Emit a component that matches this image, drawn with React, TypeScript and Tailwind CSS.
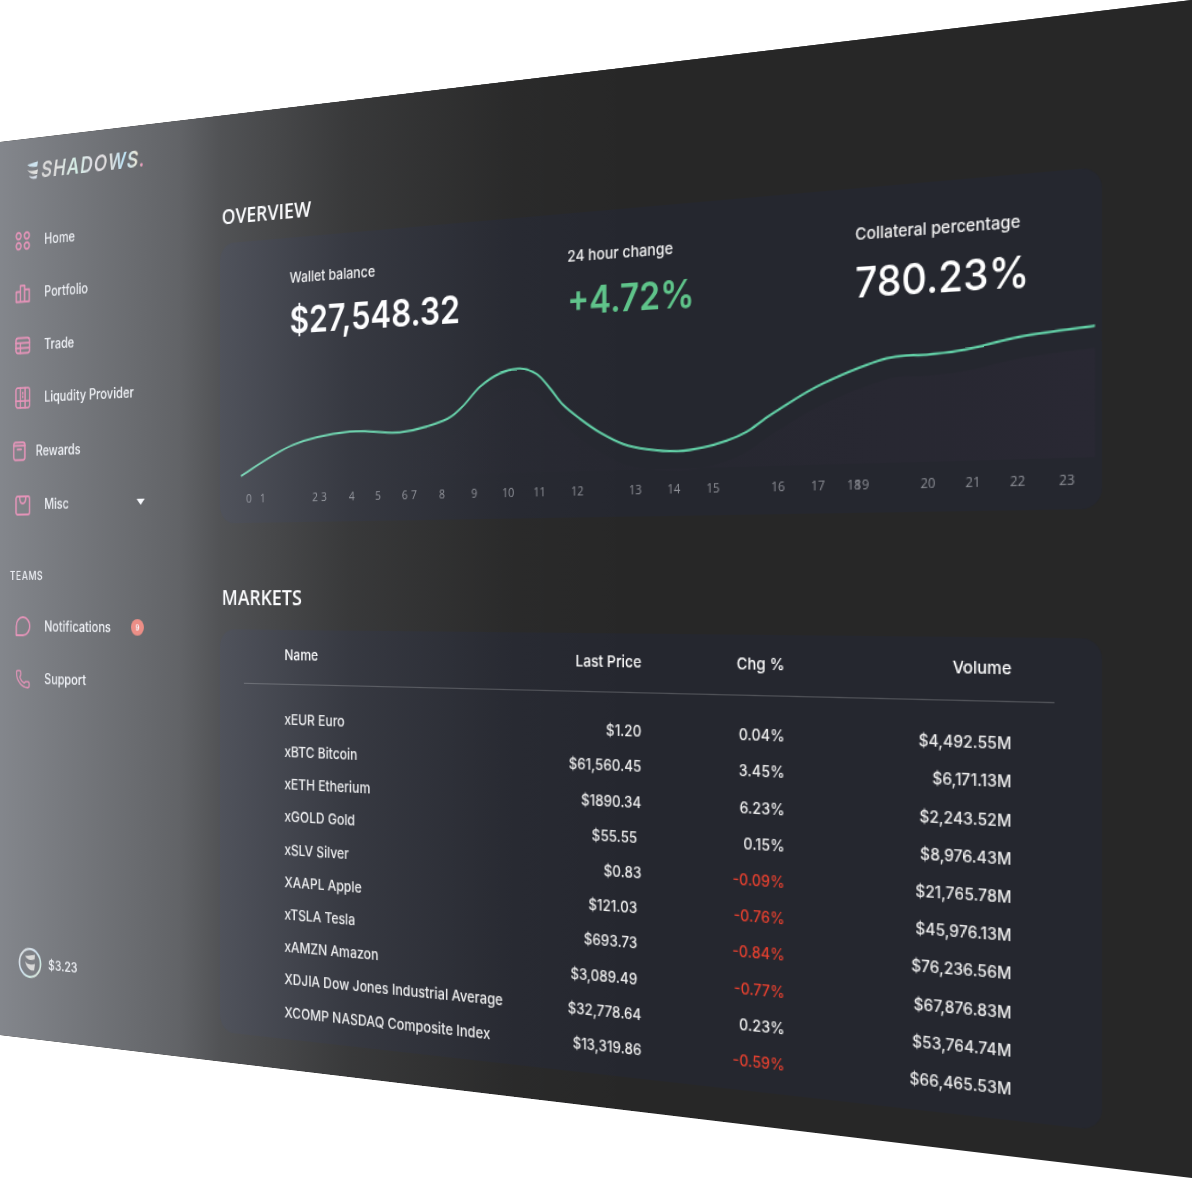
import { Phone } from "lucide-react";

const ink = "#e14982";

const markets = [
  { name: "xEUR Euro", price: "$1.20", chg: "0.04%", vol: "$4,492.55M" },
  { name: "xBTC Bitcoin", price: "$61,560.45", chg: "3.45%", vol: "$6,171.13M" },
  { name: "xETH Etherium", price: "$1890.34", chg: "6.23%", vol: "$2,243.52M" },
  { name: "xGOLD Gold", price: "$55.55", chg: "0.15%", vol: "$8,976.43M", inset: true },
  { name: "xSLV Silver", price: "$0.83", chg: "-0.09%", vol: "$21,765.78M" },
  { name: "XAAPL Apple", price: "$121.03", chg: "-0.76%", vol: "$45,976.13M", inset: true },
  { name: "xTSLA Tesla", price: "$693.73", chg: "-0.84%", vol: "$76,236.56M", inset: true },
  { name: "xAMZN Amazon", price: "$3,089.49", chg: "-0.77%", vol: "$67,876.83M", inset: true },
  { name: "XDJIA Dow Jones Industrial Average", price: "$32,778.64", chg: "0.23%", vol: "$53,764.74M" },
  { name: "XCOMP NASDAQ Composite Index", price: "$13,319.86", chg: "-0.59%", vol: "$66,465.53M" },
];

// chart space: 854 x 166
const curve: [number, number][] = [
  [24.6, 121.8], [84.8, 94.4], [148.8, 84.1], [203.8, 86.4], [250.2, 77.5], [269.7, 66.2],
  [288.8, 48.7], [309.6, 37.7], [330.2, 34.6], [347.2, 40], [360.6, 53], [374, 68.1],
  [390.7, 80.6], [410.5, 93.1], [433.4, 103.7], [456, 108.8], [484.8, 111.3], [510, 108.7],
  [531.8, 103.8], [550.4, 96.8], [565.6, 87.6], [580.8, 78.8], [619.9, 59.4], [675.5, 41.5],
  [710, 40.2], [743.8, 37.5], [788, 29.7], [848.4, 24.3],
];

const ticks: [string, number][] = [
  ["0", 34], ["1", 50], ["2", 110], ["3", 120], ["4", 151], ["5", 180], ["6", 209], ["7", 219],
  ["8", 249], ["9", 283], ["10", 318], ["11", 350], ["12", 388], ["13", 445], ["14", 482], ["15", 519],
  ["16", 579], ["17", 615], ["18", 647], ["19", 654], ["20", 711], ["21", 749], ["22", 786], ["23", 826],
];

function smooth(points: [number, number][], dy = 0) {
  let d = `M${points[0][0]} ${points[0][1] + dy}`;
  for (let i = 0; i < points.length - 1; i++) {
    const p0 = points[Math.max(i - 1, 0)];
    const p1 = points[i];
    const p2 = points[i + 1];
    const p3 = points[Math.min(i + 2, points.length - 1)];
    const c1x = p1[0] + (p2[0] - p0[0]) / 6;
    const c1y = p1[1] + (p2[1] - p0[1]) / 6 + dy;
    const c2x = p2[0] - (p3[0] - p1[0]) / 6;
    const c2y = p2[1] - (p3[1] - p1[1]) / 6 + dy;
    d += ` C${c1x.toFixed(1)} ${c1y.toFixed(1)} ${c2x.toFixed(1)} ${c2y.toFixed(1)} ${p2[0]} ${p2[1] + dy}`;
  }
  return d;
}

function Icon({ children, w = 20, h = 20 }: { children: React.ReactNode; w?: number; h?: number }) {
  return (
    <svg width={w} height={h} viewBox={`0 0 ${w} ${h}`} fill="none" stroke={ink} strokeWidth="1.9" strokeLinejoin="round" strokeLinecap="round">
      {children}
    </svg>
  );
}

const icons = {
  home: (
    <Icon>
      <circle cx="4.6" cy="5" r="3.2" />
      <circle cx="15.4" cy="5" r="3.2" />
      <circle cx="4.6" cy="15" r="3.2" />
      <circle cx="15.4" cy="15" r="3.2" />
    </Icon>
  ),
  portfolio: (
    <Icon>
      <path d="M1.5 18.5V8.5H7V18.5M7 18.5V2.5H12.5V18.5M12.5 18.5V6.5H18.5V18.5H1.5" />
    </Icon>
  ),
  trade: (
    <Icon>
      <rect x="1.2" y="2.5" width="17.6" height="15" rx="2.5" />
      <path d="M1.2 7.5H18.8M1.2 12.5H18.8M7 7.5V17.5" />
    </Icon>
  ),
  liquidity: (
    <Icon w={22} h={24}>
      <rect x="1.2" y="1.2" width="19.6" height="21.6" rx="2.5" />
      <path d="M7.6 1.2V22.8M14.4 1.2V22.8M1.2 15.5H20.8M11 6V7.5M11 10V11.5" />
    </Icon>
  ),
  rewards: (
    <Icon w={17} h={20}>
      <rect x="1.2" y="1.2" width="14.6" height="17.6" rx="2.5" />
      <path d="M1.2 4.5H15.8M6 8.2H11" />
    </Icon>
  ),
  misc: (
    <Icon>
      <rect x="1.2" y="1" width="17.6" height="18" rx="2" />
      <path d="M6 1.5C6 6.5 8 8 10 8S14 6.5 14 1.5" />
    </Icon>
  ),
  chat: (
    <Icon>
      <path d="M1.5 19V10A8.8 9 0 1 1 10.3 19Z" />
    </Icon>
  ),
  phone: <Phone size={21} color={ink} strokeWidth={1.9} />,
};

function NavRow({ icon, label, className = "", children }: { icon: React.ReactNode; label: string; className?: string; children?: React.ReactNode }) {
  return (
    <div className={`flex items-center h-[52px] ${className}`}>
      <div className="w-[20px] flex justify-center">{icon}</div>
      <span className="ml-[18px] mb-[2px] text-[14px] font-medium text-[#f4f4f4] whitespace-nowrap">{label}</span>
      {children}
    </div>
  );
}

function Stat({ label, value, className = "" }: { label: string; value: string; className?: string }) {
  return (
    <div>
      <div className="h-[20px] text-[13.7px] leading-[20px] font-medium text-[#f2f2f2]">{label}</div>
      <div className={`mt-[10px] h-[40px] leading-[40px] whitespace-nowrap ${className}`}>{value}</div>
    </div>
  );
}

function Chart() {
  const line = smooth(curve);
  const area = `${smooth(curve, 17)} L848.4 126 L24.6 126 Z`;
  return (
    <svg width="854" height="166" viewBox="0 0 854 166" className="block">
      <defs>
        <linearGradient id="areaFade" x1="0" x2="1" y1="0" y2="0">
          <stop offset="0.2" stopColor="#50335a" stopOpacity="0" />
          <stop offset="0.8" stopColor="#50335a" stopOpacity="0.07" />
          <stop offset="1" stopColor="#50335a" stopOpacity="0.09" />
        </linearGradient>
      </defs>
      <path d={area} fill="url(#areaFade)" />
      <path d={line} fill="none" stroke="#62cfa6" strokeWidth="2" />
      {ticks.map(([label, x]) => (
        <text key={label} x={x} y="147" textAnchor="middle" fontSize="11" fill="#8f9198" fontFamily="'Open Sans', sans-serif">
          {label}
        </text>
      ))}
    </svg>
  );
}

export default function App() {
  return (
    <div className="w-[1192px] h-[1178px] overflow-hidden bg-white [font-family:Inter,sans-serif]">
      <div className="h-full bg-[#272727] [clip-path:polygon(0_142px,100%_0,100%_100%,0_1035px)]">
        <div className="relative flex w-[1200px] h-[893px] bg-[#272727] origin-top-left [transform:matrix3d(0.753,-0.11868,0,-0.00020167,0,1,0,0,0,0,1,0,0,142,0,1)]">
          {/* Sidebar */}
          <aside className="w-[276px] shrink-0 flex flex-col pt-[20px] pb-[59px]">
            <div className="flex items-center h-[24px] ml-[35px]">
              <svg width="16" height="20" viewBox="0 0 16 20" className="shrink-0">
                <path d="M1 4L15 1.5L14 6.5C9 7 4 6.5 1 4Z" fill="#b9dbe6" />
                <path d="M1 9C5 11 10 11 15 9.5L14 14C9 14.5 4 13 1 9Z" fill="#d9d4c8" />
                <path d="M3 15C6 16.5 10 16.5 14 15L13 18.5C9 19 5 18 3 15Z" fill="#c5cfd8" />
              </svg>
              <span className="ml-[3px] text-[22px] leading-[24px] font-semibold italic tracking-[1.2px] bg-[linear-gradient(90deg,#c9c4ba_0%,#d9d4ca_15%,#c3ecd6_36%,#e0d6dc_50%,#d9d2c8_66%,#a2dcf2_80%,#f2e3bf_93%,#f2e3bf_95%,#e8689a_96%)] bg-clip-text text-transparent">
                SHADOWS.
              </span>
            </div>

            <nav className="mt-[31px] pl-[20px] pr-[91px]">
              <NavRow icon={icons.home} label="Home" />
              <NavRow icon={icons.portfolio} label="Portfolio" />
              <NavRow icon={icons.trade} label="Trade" />
              <NavRow icon={icons.liquidity} label="Liqudity Provider" />
              <NavRow icon={icons.rewards} label="Rewards" className="-ml-[5px] [&>span]:ml-[12px] h-[54px]" />
              <NavRow icon={icons.misc} label="Misc" className="h-[53px]">
                <div className="ml-auto mb-[1px] w-0 h-0 border-x-[5px] border-x-transparent border-t-[6px] border-t-white" />
              </NavRow>
            </nav>

            <div className="mt-[36px] pl-[13px] h-[16px] text-[11.5px] leading-[16px] tracking-[0.6px] font-medium text-[#f0f0f0]">TEAMS</div>

            <div className="mt-[16px] pl-[20px] pr-[20px]">
              <NavRow icon={icons.chat} label="Notifications">
                <span className="ml-[25px] w-[16px] h-[16px] rounded-full bg-[#ee5d4b] text-white text-[8px] font-semibold flex items-center justify-center">9</span>
              </NavRow>
              <NavRow icon={icons.phone} label="Support" />
            </div>

            <div className="mt-auto ml-[24px] flex items-center">
              <svg width="31" height="32" viewBox="0 0 31 32">
                <defs>
                  <linearGradient id="coinRing" x1="0" y1="0" x2="1" y2="1">
                    <stop offset="0" stopColor="#d6cfc2" />
                    <stop offset="0.45" stopColor="#bcd9ea" />
                    <stop offset="0.75" stopColor="#bfe9d2" />
                    <stop offset="1" stopColor="#e4d8c2" />
                  </linearGradient>
                </defs>
                <circle cx="15.5" cy="16" r="13.8" fill="none" stroke="url(#coinRing)" strokeWidth="2.2" />
                <path d="M9 9.5L22 7.5L21.5 12C16 14 12 13 9 9.5Z" fill="#cdc8bd" />
                <path d="M9 15C13 18 18 18 22 16.5L21 23C16 24.5 11 21 9 15Z" fill="#cdc8bd" />
              </svg>
              <span className="ml-[8px] text-[13.5px] font-medium text-[#f4f4f4]">$3.23</span>
            </div>
          </aside>

          {/* Main */}
          <main className="w-[854px] pt-[83px]">
            <h2 className="h-[24px] pl-[2px] text-[20.5px] leading-[24px] font-semibold text-white [font-family:'Open_Sans',sans-serif]">OVERVIEW</h2>
            <section className="mt-[14px] h-[264px] rounded-[16px] bg-[#25272f] overflow-hidden">
              <div className="grid grid-cols-[297px_270px_1fr] pl-[81px] pt-[27px] h-[98px]">
                <Stat label="Wallet balance" value="$27,548.32" className="text-[34px] font-semibold text-white" />
                <Stat label="24 hour change" value="+4.72%" className="text-[32.5px] font-semibold text-[#5fc48a]" />
                <Stat label="Collateral percentage" value="780.23%" className="text-[34px] font-medium text-white" />
              </div>
              <Chart />
            </section>

            <h2 className="mt-[57px] h-[24px] pl-[2px] text-[20.5px] leading-[24px] font-semibold text-white [font-family:'Open_Sans',sans-serif]">MARKETS</h2>
            <section className="mt-[19px] h-[380px] rounded-[16px] bg-[#25272f] overflow-hidden">
              <div className="grid grid-cols-[256px_120px_134px_196px] pl-[75px] h-[48px] items-center text-[13.7px] font-medium text-white">
                <div className="mb-[2px]">Name</div>
                <div className="text-right">Last Price</div>
                <div className="text-right">Chg %</div>
                <div className="text-right">Volume</div>
              </div>
              <div className="ml-[28px] w-[788px] mt-[2px] h-px bg-white/20" />
              <div className="mt-[18px]">
                {markets.map((row) => (
                  <div key={row.name} className="grid grid-cols-[256px_120px_134px_196px] pl-[75px] h-[30.2px] items-center text-[13.2px] font-medium text-[#efefef] whitespace-nowrap">
                    <div className="mb-[2px] text-[13.6px]">{row.name}</div>
                    <div className={`text-right ${row.inset ? "pr-[4px]" : ""}`}>{row.price}</div>
                    <div className={`text-right ${row.chg.startsWith("-") ? "text-[#e5402f]" : ""}`}>{row.chg}</div>
                    <div className="text-right">{row.vol}</div>
                  </div>
                ))}
              </div>
            </section>
          </main>

          {/* Sheen over the left of the panel */}
          <div className="absolute inset-0 pointer-events-none bg-[linear-gradient(90deg,rgba(232,238,250,0.48)_0px,rgba(232,238,250,0.3)_228px,rgba(232,238,250,0.22)_276px,rgba(232,238,250,0.09)_425px,rgba(232,238,250,0.015)_600px,rgba(232,238,250,0)_720px)]" />
        </div>
      </div>
    </div>
  );
}
